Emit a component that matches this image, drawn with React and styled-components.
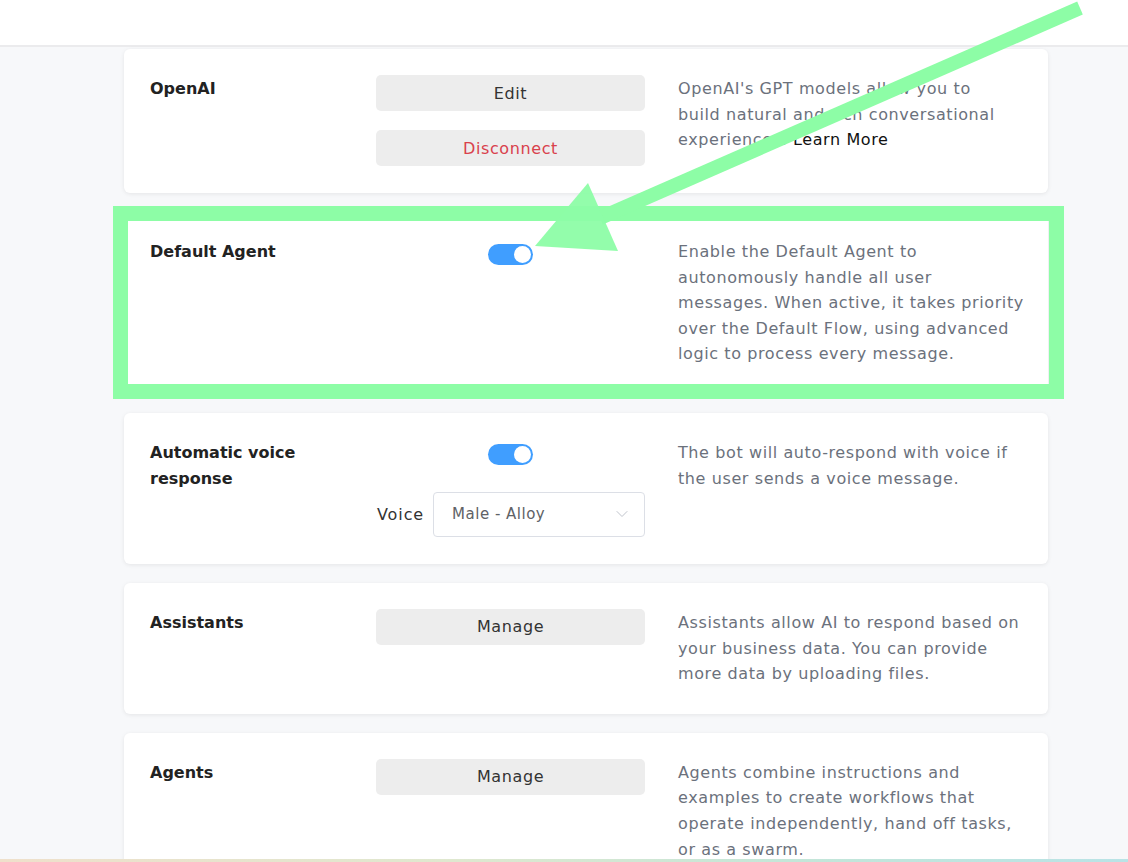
import React, { useState } from "react";
import styled, { createGlobalStyle } from "styled-components";
import { ChevronDown } from "lucide-react";

const GlobalStyle = createGlobalStyle`
  * { box-sizing: border-box; }
  body {
    margin: 0;
    background: #f7f8fa;
    font-family: "DejaVu Sans", "Open Sans", sans-serif;
    color: #222;
  }
`;

const Page = styled.div`
  position: relative;
  min-height: 100vh;
`;

const TopBar = styled.header`
  height: 47px;
  background: #fff;
  border-bottom: 2px solid #ebebed;
`;

const List = styled.main`
  width: 924px;
  margin-left: 124px;
  padding-top: 2px;
  display: flex;
  flex-direction: column;
  gap: 19px;
`;

const Card = styled.section`
  background: #fff;
  border-radius: 6px;
  box-shadow: 0 1px 4px rgba(0, 0, 0, 0.08);
  padding: 26px 26px 27px;
  display: grid;
  grid-template-columns: 193px 269px 1fr;
  column-gap: 33px;
  align-items: start;
`;

const Title = styled.h3`
  margin: 0;
  padding-top: 1px;
  font-size: 16px;
  font-weight: 700;
  line-height: 25.6px;
  color: #222;
`;

const Controls = styled.div`
  display: flex;
  flex-direction: column;
  gap: ${({ $gap }) => $gap || 19}px;
`;

const GrayButton = styled.button`
  height: 36px;
  width: 100%;
  border: none;
  border-radius: 5px;
  background: #ededed;
  font-family: inherit;
  font-size: 16px;
  letter-spacing: 0.6px;
  color: ${({ $danger }) => ($danger ? "#d9414c" : "#333")};
  cursor: pointer;
`;

const Description = styled.p`
  margin: 0;
  padding-top: 1px;
  font-size: 16px;
  line-height: 25.6px;
  letter-spacing: 0.6px;
  color: #6b717c;
`;

const Line = styled.span`
  display: block;
  white-space: nowrap;
`;

const LearnMore = styled.a`
  color: #111;
  text-decoration: none;
`;

const ToggleRow = styled.div`
  height: 32px;
  display: flex;
  align-items: center;
  justify-content: center;
`;

const Track = styled.button`
  position: relative;
  width: 45px;
  height: 21px;
  padding: 0;
  border: none;
  border-radius: 11px;
  background: ${({ $on }) => ($on ? "#409eff" : "#dcdfe6")};
  cursor: pointer;
`;

const Knob = styled.span`
  position: absolute;
  top: 2px;
  left: ${({ $on }) => ($on ? "26px" : "2px")};
  width: 17px;
  height: 17px;
  border-radius: 50%;
  background: #fff;
`;

const VoiceRow = styled.div`
  margin-top: 2px;
  display: flex;
  align-items: center;
  gap: 9px;
  margin-left: 1px;
`;

const VoiceLabel = styled.span`
  font-size: 16px;
  letter-spacing: 0.9px;
  color: #333;
`;

const SelectBox = styled.div`
  flex: 1;
  height: 45px;
  border: 1px solid #dcdfe6;
  border-radius: 4px;
  padding: 0 12px 0 18px;
  display: flex;
  align-items: center;
  justify-content: space-between;
  font-size: 15px;
  letter-spacing: 0.5px;
  color: #606266;
`;

const Annotation = styled.svg`
  position: absolute;
  top: 0;
  left: 0;
  pointer-events: none;
  z-index: 10;
`;

const BottomGlow = styled.div`
  position: fixed;
  left: 0;
  right: 0;
  bottom: 0;
  height: 3px;
  background: linear-gradient(90deg, #efe0cb, #dfe8cf 40%, #c4e6d8 70%, #b9e3e6);
`;

const Toggle = ({ initial }) => {
  const [on, setOn] = useState(initial);
  return (
    <ToggleRow>
      <Track $on={on} onClick={() => setOn(!on)}>
        <Knob $on={on} />
      </Track>
    </ToggleRow>
  );
};

const Lines = ({ lines }) => (
  <Description>
    {lines.map((l, i) => (
      <Line key={i}>{l}</Line>
    ))}
  </Description>
);

const App = () => {
  return (
    <Page>
      <GlobalStyle />
      <TopBar />
      <List>
        <Card>
          <Title>OpenAI</Title>
          <Controls>
            <GrayButton>Edit</GrayButton>
            <GrayButton $danger>Disconnect</GrayButton>
          </Controls>
          <Lines
            lines={[
              "OpenAI's GPT models allow you to",
              "build natural and rich conversational",
              <>
                experiences. <LearnMore href="#">Learn More</LearnMore>
              </>,
            ]}
          />
        </Card>

        <Card>
          <Title>Default Agent</Title>
          <Toggle initial={true} />
          <Lines
            lines={[
              "Enable the Default Agent to",
              "autonomously handle all user",
              "messages. When active, it takes priority",
              "over the Default Flow, using advanced",
              "logic to process every message.",
            ]}
          />
        </Card>

        <Card>
          <Title>Automatic voice response</Title>
          <Controls $gap={19}>
            <Toggle initial={true} />
            <VoiceRow>
              <VoiceLabel>Voice</VoiceLabel>
              <SelectBox>
                Male - Alloy
                <ChevronDown size={20} color="#c0c4cc" strokeWidth={1.2} />
              </SelectBox>
            </VoiceRow>
          </Controls>
          <Lines
            lines={[
              "The bot will auto-respond with voice if",
              "the user sends a voice message.",
            ]}
          />
        </Card>

        <Card>
          <Title>Assistants</Title>
          <GrayButton>Manage</GrayButton>
          <Lines
            lines={[
              "Assistants allow AI to respond based on",
              "your business data. You can provide",
              "more data by uploading files.",
            ]}
          />
        </Card>

        <Card>
          <Title>Agents</Title>
          <GrayButton>Manage</GrayButton>
          <Lines
            lines={[
              "Agents combine instructions and",
              "examples to create workflows that",
              "operate independently, hand off tasks,",
              "or as a swarm.",
            ]}
          />
        </Card>
      </List>

      <Annotation width="1128" height="862" viewBox="0 0 1128 862">
        <rect
          x="120.5"
          y="213.5"
          width="936"
          height="178"
          fill="none"
          stroke="#8dfda6"
          strokeWidth="15"
        />
        <line x1="1080" y1="8" x2="600" y2="218" stroke="#8dfda6" strokeWidth="14" />
        <polygon points="588,183 535,246 618,251" fill="#8dfda6" opacity="0.95" />
      </Annotation>
      <BottomGlow />
    </Page>
  );
};

export default App;
